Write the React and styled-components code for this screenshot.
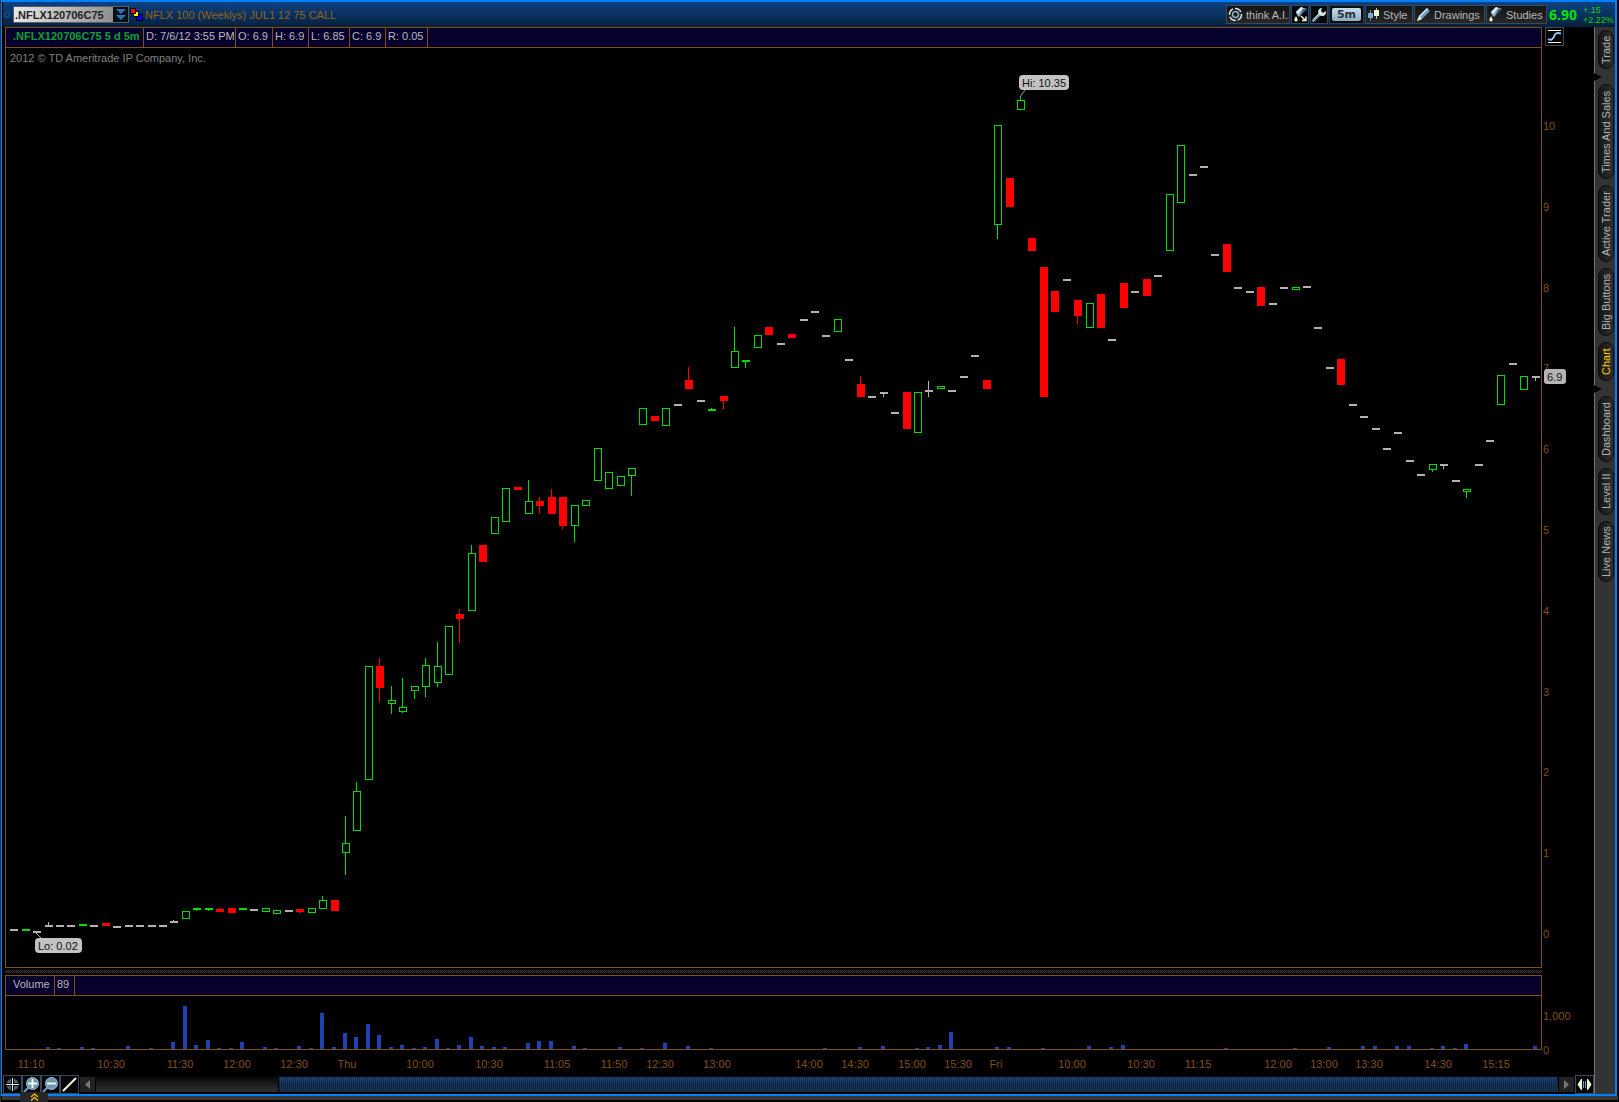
import React from "react";
import styled, { createGlobalStyle, css } from "styled-components";

// one entry per five minute bar: [kind, top, height, wick top, wick bottom]
// g = up, r = down, n = unchanged
const candles = [
  ["n", 929, 2], ["g", 929, 2], ["n", 931, 2], ["n", 925, 2, 922], ["n", 925, 2], ["n", 925, 2],
  ["g", 924, 2], ["n", 925, 2], ["r", 923, 3], ["n", 926, 2], ["n", 925, 2], ["n", 925, 2],
  ["n", 925, 2], ["n", 925, 2], ["n", 921, 2, 920], ["g", 911, 8], ["g", 908, 2, 0, 911], ["g", 908, 2, 0, 911],
  ["r", 909, 3, 908], ["r", 908, 5], ["g", 908, 2], ["n", 909, 2], ["g", 908, 4], ["g", 910, 4],
  ["n", 910, 2], ["r", 909, 3, 0, 913], ["g", 908, 5], ["g", 900, 9, 896], ["r", 900, 11], ["g", 843, 10, 816, 875],
  ["g", 791, 40, 782], ["g", 666, 114], ["r", 666, 22, 658, 702], ["g", 700, 4, 686, 714], ["g", 707, 5, 678, 713], ["g", 686, 5, 0, 699],
  ["g", 665, 22, 658, 697], ["g", 666, 17, 642, 687], ["g", 626, 49], ["r", 614, 5, 609, 643], ["g", 553, 58, 545], ["r", 545, 17],
  ["g", 517, 17], ["g", 488, 34], ["r", 487, 3], ["g", 501, 13, 480], ["r", 501, 5, 497, 514], ["r", 497, 17, 489],
  ["r", 497, 29, 0, 529], ["g", 505, 21, 0, 542], ["g", 500, 6], ["g", 448, 33], ["g", 472, 17], ["g", 476, 10],
  ["g", 468, 8, 0, 496], ["g", 408, 17], ["r", 416, 5], ["g", 408, 18], ["n", 404, 2], ["r", 380, 9, 367],
  ["n", 400, 2], ["g", 409, 2, 408], ["r", 396, 5, 0, 409], ["g", 351, 17, 327], ["g", 360, 2, 0, 368], ["g", 335, 13],
  ["r", 327, 8], ["n", 343, 2], ["r", 334, 4], ["n", 319, 2], ["n", 311, 2], ["n", 335, 2],
  ["g", 319, 13], ["n", 359, 2], ["r", 384, 13, 376], ["n", 396, 2], ["n", 392, 2, 0, 397], ["n", 412, 2],
  ["r", 392, 37], ["g", 392, 41], ["n", 390, 2, 381, 397], ["g", 386, 3], ["n", 390, 2], ["n", 376, 2],
  ["n", 355, 2], ["r", 380, 9], ["g", 125, 100, 0, 239], ["r", 178, 29], ["g", 100, 10, 97], ["r", 238, 13],
  ["r", 267, 130], ["r", 291, 21], ["n", 279, 2], ["r", 300, 16, 0, 324], ["g", 303, 25], ["r", 294, 34],
  ["n", 339, 2], ["r", 283, 25], ["n", 291, 2], ["r", 279, 17], ["n", 275, 2], ["g", 194, 57],
  ["g", 145, 58], ["n", 174, 2], ["n", 166, 2], ["n", 254, 2], ["r", 244, 28], ["n", 287, 2],
  ["n", 291, 2], ["r", 287, 19], ["n", 303, 2], ["n", 287, 2], ["g", 287, 3], ["n", 286, 2],
  ["n", 327, 2], ["n", 367, 2], ["r", 359, 26], ["n", 404, 2], ["n", 416, 2], ["n", 428, 2],
  ["n", 448, 2], ["n", 432, 2], ["n", 460, 2], ["n", 474, 2], ["g", 464, 6, 0, 472], ["n", 464, 2, 0, 469],
  ["n", 480, 2], ["g", 489, 3, 0, 498], ["n", 464, 2], ["n", 440, 2], ["g", 375, 30], ["n", 363, 2],
  ["g", 376, 14], ["n", 376, 2, 0, 381],
];

// [bar, height]
const volumes = [
  [3, 2], [4, 1], [6, 2], [7, 1], [10, 3], [12, 1], [14, 7], [15, 43], [16, 4], [17, 9], [18, 1], [19, 1],
  [20, 7], [22, 2], [23, 1], [25, 3], [26, 1], [27, 36], [28, 2], [29, 16], [30, 12], [31, 25], [32, 14],
  [33, 2], [34, 4], [35, 1], [36, 2], [37, 10], [38, 1], [39, 4], [40, 12], [41, 3], [42, 2], [43, 2],
  [45, 6], [46, 8], [47, 8], [49, 3], [50, 1], [53, 2], [55, 1], [57, 6], [59, 3], [61, 1], [71, 1],
  [74, 2], [76, 3], [79, 1], [80, 2], [81, 4], [82, 17], [86, 2], [87, 2], [90, 1], [94, 3], [96, 2],
  [97, 4], [106, 1], [112, 1], [115, 2], [118, 3], [119, 3], [121, 3], [122, 3], [124, 1], [125, 3],
  [126, 1], [127, 5], [133, 3],
];

const times = [
  [31, "11:10"], [111, "10:30"], [180, "11:30"], [237, "12:00"], [294, "12:30"], [347, "Thu"],
  [420, "10:00"], [489, "10:30"], [557, "11:05"], [614, "11:50"], [660, "12:30"], [717, "13:00"],
  [809, "14:00"], [855, "14:30"], [912, "15:00"], [958, "15:30"], [996, "Fri"], [1072, "10:00"],
  [1141, "10:30"], [1198, "11:15"], [1278, "12:00"], [1324, "13:00"], [1369, "13:30"],
  [1438, "14:30"], [1496, "15:15"],
];

const quotes = [
  ["D: 7/6/12 3:55 PM", 92],
  ["O: 6.9", 37],
  ["H: 6.9", 36],
  ["L: 6.85", 41],
  ["C: 6.9", 36],
  ["R: 0.05", 42],
];

const tabs = [
  ["Trade", 39, true],
  ["Times And Sales", 95],
  ["Active Trader", 77],
  ["Big Buttons", 68],
  ["Chart", 39, true],
  ["Dashboard", 66],
  ["Level II", 47],
  ["Live News", 61],
];

const colors = { g: "#00dc0a", r: "#ff0000", n: "#b2b2b2" };

const useSize = (w, h) => {
  const ref = React.useRef(null);
  const [size, setSize] = React.useState([w, h]);
  React.useLayoutEffect(() => {
    const read = () => {
      const box = ref.current.getBoundingClientRect();
      setSize([box.width, box.height]);
    };
    read();
    const ro = new ResizeObserver(read);
    ro.observe(ref.current);
    return () => ro.disconnect();
  }, []);
  return [ref, size[0], size[1]];
};

const barX = (i, w) => Math.round(4.22 + (i * (w - 13.45)) / 133);

const PricePlot = () => {
  const [ref, w, h] = useSize(1535, 919);
  const y = (v) => Math.round(((v - 48) * h) / 919);
  const loX = barX(2, w);
  const hiX = barX(88, w);
  return (
    <Plot ref={ref}>
      {candles.map(([kind, top, height, up, down], i) => {
        const x = barX(i, w);
        const bottom = top + height;
        const size = Math.max(2, y(bottom) - y(top));
        const color = colors[kind];
        return (
          <g key={i} fill={color}>
            {up ? <rect x={x + 3} y={y(up)} width="1" height={y(top) - y(up)} /> : null}
            {down ? <rect x={x + 3} y={y(bottom)} width="1" height={y(down) - y(bottom)} /> : null}
            {kind === "g" && size > 2 ? (
              <rect x={x + 0.5} y={y(top) + 0.5} width="7" height={size - 1} fill="none" stroke={color} />
            ) : (
              <rect x={x} y={y(top)} width="8" height={size} />
            )}
          </g>
        );
      })}
      <line x1={loX + 3} y1={y(933)} x2={loX + 8} y2={y(938)} stroke="#b2b2b2" />
      <rect x={loX + 2} y={y(938)} width="47" height="15" rx="4" fill="#c3c3c3" />
      <text x={loX + 5} y={y(938) + 12} fill="#111">Lo: 0.02</text>
      <line x1={hiX + 3} y1={y(97)} x2={hiX + 8} y2={y(90)} stroke="#999" />
      <rect x={hiX + 2} y={y(75)} width="50" height="15" rx="4" fill="#c3c3c3" />
      <text x={hiX + 5} y={y(75) + 12} fill="#111">Hi: 10.35</text>
    </Plot>
  );
};

const PriceAxis = () => {
  const [ref, , h] = useSize(52, 941);
  const y = (v) => Math.round(((v - 27) * h) / 941);
  return (
    <Axis ref={ref}>
      {[0, 1, 2, 3, 4, 5, 6, 7, 8, 9, 10].map((n) => (
        <text key={n} x="1" y={y(934 - n * 80.8) + 4}>{n}</text>
      ))}
      <rect x="2" y={y(369)} width="22" height="15" rx="3" fill="#b4b4b4" />
      <text x="5" y={y(369) + 12} className="last">6.9</text>
    </Axis>
  );
};

const VolumePlot = () => {
  const [ref, w, h] = useSize(1535, 53);
  return (
    <Plot ref={ref}>
      {volumes.map(([i, v]) => (
        <rect key={i} x={barX(i, w) + 1} y={h - v} width="4" height={v} fill="#1e41b4" />
      ))}
    </Plot>
  );
};

const TimeAxis = () => {
  const [ref, w] = useSize(1537, 25);
  return (
    <Axis ref={ref}>
      {times.map(([x, label]) => (
        <text key={x} x={Math.round(((x - 5) * w) / 1537)} y="18" textAnchor="middle">{label}</text>
      ))}
    </Axis>
  );
};

const Flask = ({ arrow }) => (
  <svg width="15" height="15" viewBox="0 0 15 15" aria-hidden="true">
    <path d="M3 5L8 0l6 2-4 3-4 5-2-2z" fill="#8db0cc" />
    <path d="M3 5l5-5 2 1-5 6z" fill="#e3eef6" />
    <path d="M10 2l4 0-7 7z" fill="#3d5f7c" />
    <path d="M3 9l1.500 3a1.700 1.700 0 1 1-3 0z" fill="#eef5c8" />
    {arrow && <path d="M8 9l4 4M13 9.500V13.500H9" fill="none" stroke="#eef5d8" strokeWidth="1.500" />}
  </svg>
);

const Magnifier = ({ plus }) => (
  <svg width="17" height="17" viewBox="0 0 17 17" aria-hidden="true">
    <path d="M1 16l5-5" stroke="#6d9cc0" strokeWidth="2" />
    <circle cx="9.500" cy="7.500" r="6" fill="#6b94b3" stroke="#9cc0da" />
    <path d={plus ? "M5 7.500h9M9.500 3v9" : "M5 7.500h9"} stroke="#f6fbe0" strokeWidth="2" />
  </svg>
);

const App = () => {
  const [symbol, setSymbol] = React.useState(".NFLX120706C75");
  const [tab, setTab] = React.useState("Chart");

  return (
    <Page>
      <GlobalStyle />
      <Frame>
        <TitleBar>
          <Ring />
          <SymbolBox>
            <input aria-label="Symbol" value={symbol} onChange={(e) => setSymbol(e.target.value)} />
            <button aria-label="Choose symbol">
              <svg width="10" height="13" viewBox="0 0 10 13" fill="#2c72bd">
                <path d="M0 1h10L5 6zM0 7h10l-5 5z" />
              </svg>
            </button>
          </SymbolBox>
          <LinkButton aria-label="Link group">
            <svg width="13" height="13" viewBox="0 0 13 13" stroke="#000" shapeRendering="crispEdges">
              <rect x="6.500" y="6.500" width="6" height="6" fill="#0000ff" />
              <rect x="3.500" y="3.500" width="5" height="5" fill="#ffff00" />
              <rect x="0.500" y="0.500" width="5" height="5" fill="#ff0000" />
            </svg>
          </LinkButton>
          <Description>NFLX 100 (Weeklys) JUL1 12 75 CALL</Description>
          <Tools>
            <ToolButton $w={64}>
              <svg width="15" height="15" viewBox="0 0 15 15" fill="none" aria-hidden="true">
                <circle cx="7.500" cy="7.500" r="6" stroke="#d5e4ef" strokeWidth="1.500" strokeDasharray="7 2" />
                <circle cx="7.500" cy="7.500" r="3" stroke="#8fb3cc" strokeWidth="1.500" />
                <circle cx="7.500" cy="7.500" r="1" fill="#0b1520" />
              </svg>
              think A.I.
            </ToolButton>
            <ToolButton $w={18} $dark aria-label="Edit studies">
              <Flask arrow />
            </ToolButton>
            <ToolButton $w={18} $dark aria-label="Settings">
              <svg width="15" height="15" viewBox="0 0 15 15" aria-hidden="true">
                <path d="M1.500 13.500l7-7" stroke="#6e96b5" strokeWidth="3" strokeLinecap="round" />
                <path d="M1.500 12.500l6-6" stroke="#dcebf3" strokeWidth="1" />
                <path d="M14 4a4 4 0 1 1-4-3L9 4l2 2z" fill="#d9e8dc" />
              </svg>
            </ToolButton>
            <Period><span>5m</span></Period>
            <ToolButton $w={48}>
              <svg width="13" height="13" viewBox="0 0 13 13" shapeRendering="crispEdges" aria-hidden="true">
                <path d="M3 2h1v11H3z" fill="#5b8fb8" />
                <rect x="1" y="5" width="5" height="5" fill="#79aed3" />
                <path d="M9 0h1v11H9z" fill="#b8c8a0" />
                <rect x="7" y="2" width="5" height="6" fill="#eaf3d2" />
              </svg>
              Style
            </ToolButton>
            <ToolButton $w={71}>
              <svg width="15" height="15" viewBox="0 0 15 15" aria-hidden="true">
                <path d="M1 14l2-5 8-8 3 3-8 8z" fill="#6f9cc4" />
                <path d="M3 9l8-8 1 1-8 8z" fill="#dbeaf5" />
                <path d="M1 14l2-5 3 3z" fill="#f0f3d8" />
              </svg>
              Drawings
            </ToolButton>
            <ToolButton $w={61}>
              <Flask />
              Studies
            </ToolButton>
          </Tools>
          <LastPrice>6.90</LastPrice>
          <Change>
            <span>+.15</span>
            <span>+2.22%</span>
          </Change>
        </TitleBar>

        <Body>
          <ChartColumn>
            <Charts>
              <Panel>
                <PanelHeader>
                  <HeaderCell $w={138} $strong>.NFLX120706C75 5 d 5m</HeaderCell>
                  {quotes.map(([text, w]) => (
                    <HeaderCell key={text} $w={w}>{text}</HeaderCell>
                  ))}
                </PanelHeader>
                <PlotArea>
                  <Copyright>2012 © TD Ameritrade IP Company, Inc.</Copyright>
                  <PricePlot />
                </PlotArea>
              </Panel>
              <AxisCell>
                <PriceAxis />
                <CurveButton aria-label="Fit curve">
                  <svg width="17" height="17" viewBox="0 0 17 17" fill="none" aria-hidden="true">
                    <path d="M2 2.500h13M2 14.500h13" stroke="#f4f5dc" />
                    <path d="M2 11c3 2 5 0 6-2.500S10 4 15 5.500" stroke="#8fc6f0" strokeWidth="2" />
                  </svg>
                </CurveButton>
              </AxisCell>
              <Splitter />
              <Panel>
                <PanelHeader>
                  <HeaderCell $w={49} $first>Volume</HeaderCell>
                  <HeaderCell $w={20}>89</HeaderCell>
                </PanelHeader>
                <PlotArea>
                  <VolumePlot />
                </PlotArea>
              </Panel>
              <AxisCell>
                <Axis>
                  <text x="1" y="45">1,000</text>
                  <text x="1" y="79">0</text>
                </Axis>
              </AxisCell>
              <AxisCell>
                <TimeAxis />
              </AxisCell>
            </Charts>
            <BottomBar>
              <IconButton aria-label="Crosshair">
                <svg width="17" height="17" viewBox="0 0 17 17" aria-hidden="true">
                  <circle cx="8.500" cy="8.500" r="6" fill="#47637a" />
                  <path d="M2 8.500h13M8.500 2v13" stroke="#000" strokeWidth="3" />
                  <path d="M2 8.500h13M8.500 2v13" stroke="#eef3d8" />
                </svg>
              </IconButton>
              <IconButton aria-label="Zoom in"><Magnifier plus /></IconButton>
              <IconButton aria-label="Zoom out"><Magnifier /></IconButton>
              <IconButton aria-label="Trend line">
                <svg width="17" height="17" viewBox="0 0 17 17" aria-hidden="true">
                  <path d="M2 15L15 2" stroke="#f2f6dc" strokeWidth="2" />
                </svg>
              </IconButton>
              <ArrowButton aria-label="Scroll left">
                <svg width="5" height="9" viewBox="0 0 5 9" fill="#777"><path d="M5 0v9L0 4.500z" /></svg>
              </ArrowButton>
              <Track>
                <Thumb role="scrollbar" aria-label="Time range" aria-controls="root" aria-valuenow={100} />
              </Track>
              <ArrowButton aria-label="Scroll right">
                <svg width="5" height="9" viewBox="0 0 5 9" fill="#777"><path d="M0 0v9l5-4.500z" /></svg>
              </ArrowButton>
              <IconButton aria-label="Fit width">
                <svg width="17" height="17" viewBox="0 0 17 17" aria-hidden="true">
                  <path d="M6 3v11L5 14 1.500 8.500 5 3zM11 3v11h1l3.500-5.500L12 3z" fill="#f1f5d6" />
                  <path d="M7.500 5v7M9.500 5v7" stroke="#6f9cc4" />
                </svg>
              </IconButton>
            </BottomBar>
          </ChartColumn>
          <SideBar>
            {tabs.map(([name, h, notch]) => (
              <React.Fragment key={name}>
                <Tab $h={h} $on={tab === name} onClick={() => setTab(name)}>{name}</Tab>
                {notch && <Notch />}
              </React.Fragment>
            ))}
          </SideBar>
        </Body>
      </Frame>
      <Footer>
        <Expand aria-label="Expand">
          <svg width="9" height="8" viewBox="0 0 9 8" fill="none" stroke="#e6b400" aria-hidden="true">
            <path d="M1 4l3.500-3L8 4M1 7.500l3.500-3 3.500 3" strokeWidth="1.500" />
          </svg>
        </Expand>
      </Footer>
    </Page>
  );
};

const GlobalStyle = createGlobalStyle`
  * { box-sizing: border-box; }
  body {
    margin: 0;
    background: #000;
    color: #b8b8b8;
    font-family: "Liberation Sans", Arial, sans-serif;
    font-size: 11px;
  }
  button, input {
    margin: 0;
    padding: 0;
    border: 0;
    font: inherit;
    color: inherit;
    background: none;
  }
  svg { display: block; flex: none; }
`;
const center = css`
  display: flex;
  align-items: center;
  justify-content: center;
`;
const Page = styled.div`
  display: flex;
  flex-direction: column;
  height: 100vh;
  min-height: 600px;
  border-left: 1px solid #333;
`;
const Frame = styled.div`
  flex: 1;
  min-height: 0;
  display: flex;
  flex-direction: column;
  margin-right: 2px;
  border: 2px solid #0080ff;
  border-left-width: 1px;
`;
const TitleBar = styled.div`
  display: flex;
  align-items: center;
  height: 25px;
  margin-left: 1px;
  background: linear-gradient(#0c4282, #0a3160 50%, #05203c);
`;
const Ring = styled.span`
  width: 6px;
  height: 6px;
  margin: 0 3px 0 1px;
  border: 1px solid #0b57ae;
  border-radius: 50%;
`;
const SymbolBox = styled.div`
  display: flex;
  width: 116px;
  height: 17px;
  border: 1px solid #52606e;
  input {
    flex: 1;
    min-width: 0;
    padding-left: 1px;
    color: #222;
    font-weight: 700;
    background: linear-gradient(100deg, #e8e8e8, #8e8e8e);
  }
  button {
    ${center}
    width: 15px;
    background: #0a0f16;
  }
`;
const LinkButton = styled.button`
  margin-left: 1px;
`;
const Description = styled.span`
  margin-left: 2px;
  color: #966414;
`;
const Tools = styled.div`
  display: flex;
  gap: 1px;
  margin-left: auto;
`;
const ToolButton = styled.button`
  display: flex;
  align-items: center;
  gap: 3px;
  width: ${(props) => props.$w}px;
  height: 19px;
  padding-left: 1px;
  white-space: nowrap;
  border: 1px solid #3c4856;
  background: ${(props) => (props.$dark ? "#05080c" : "linear-gradient(#141414, #272727)")};
`;
const Period = styled.button`
  width: 35px;
  height: 19px;
  padding: 2px;
  border: 1px solid #2c3a4a;
  background: #0a0d12;
  span {
    display: block;
    height: 13px;
    line-height: 13px;
    border-radius: 2px;
    color: #26343f;
    font-family: "DejaVu Sans", sans-serif;
    font-weight: 700;
    background: linear-gradient(#c6dcec, #8fabc4);
  }
`;
const LastPrice = styled.span`
  margin-left: 2px;
  color: #00e400;
  font-family: "Open Sans", sans-serif;
  font-size: 14px;
  font-weight: 700;
`;
const Change = styled.span`
  display: flex;
  flex-direction: column;
  width: 32px;
  margin-left: 6px;
  color: #00dc00;
  font-size: 9px;
  line-height: 10px;
`;
const Body = styled.div`
  flex: 1;
  min-height: 0;
  display: flex;
`;
const ChartColumn = styled.div`
  flex: 1;
  min-width: 0;
  display: flex;
  flex-direction: column;
`;
const Charts = styled.div`
  flex: 1;
  min-height: 0;
  display: grid;
  grid-template-columns: minmax(0, 1fr) 52px;
  grid-template-rows: minmax(0, 1fr) 7px 75px 25px;
  margin-left: 3px;
`;
const Panel = styled.div`
  display: flex;
  flex-direction: column;
  min-height: 0;
  border: 1px solid #824f14;
`;
const PanelHeader = styled.div`
  display: flex;
  flex: none;
  height: 20px;
  border-bottom: 1px solid #824f14;
  background: #06002c;
`;
const HeaderCell = styled.div`
  width: ${(props) => props.$w}px;
  padding-left: ${(props) => (props.$strong || props.$first ? 7 : 2)}px;
  line-height: 17px;
  white-space: nowrap;
  border-right: 1px solid #824f14;
  ${(props) => props.$strong && css`
    color: #0fa032;
    font-weight: 700;
  `}
`;
const PlotArea = styled.div`
  position: relative;
  flex: 1;
  min-height: 0;
`;
const Plot = styled.svg`
  width: 100%;
  height: 100%;
  font-size: 11px;
  overflow: visible;
`;
const Copyright = styled.span`
  position: absolute;
  top: 4px;
  left: 4px;
  color: #808080;
  line-height: 12px;
`;
const AxisCell = styled.div`
  position: relative;
  min-height: 0;
`;
const Axis = styled.svg`
  width: 100%;
  height: 100%;
  overflow: visible;
  font-size: 11px;
  fill: #824f14;
  .last { fill: #111; }
`;
const CurveButton = styled.button`
  position: absolute;
  top: 0;
  left: 3px;
  border: 1px solid #3c4856;
`;
const Splitter = styled.div`
  grid-column: 1 / -1;
  height: 3px;
  margin: 2px 52px 2px 0;
  background: repeating-conic-gradient(#404040 0 25%, #000 0 50%) 0 0 / 2px 2px;
`;
const BottomBar = styled.div`
  display: flex;
  align-items: center;
  height: 19px;
  margin-left: 1px;
`;
const IconButton = styled.button`
  ${center}
  width: 19px;
  height: 19px;
  border: 1px solid #3c4856;
  background: #03060a;
`;
const ArrowButton = styled.button`
  ${center}
  width: 15px;
  height: 15px;
  margin: 0 1px;
  background: #222;
`;
const Track = styled.div`
  flex: 1;
  display: flex;
  justify-content: flex-end;
  height: 15px;
  background: linear-gradient(#080808, #303030);
`;
const Thumb = styled.div`
  width: 87.5%;
  margin-right: 1px;
  border-left: 1px solid #000;
  background:
    repeating-linear-gradient(90deg, rgba(0, 0, 0, 0.35) 0 1px, transparent 1px 2px),
    linear-gradient(#1d4a80, #153560 50%, #1b3450);
`;
const SideBar = styled.div`
  display: flex;
  flex-direction: column;
  gap: 6px;
  width: 21px;
  padding: 3px 0 0 3px;
  border-left: 1px solid #757575;
  background: #333;
`;
const Tab = styled.button`
  ${center}
  width: 16px;
  height: ${(props) => props.$h}px;
  border: 1px solid #0c0c0c;
  border-radius: 8px;
  background: linear-gradient(90deg, #303030, #161616);
  color: ${(props) => (props.$on ? "#ffc800" : "#b0b0b0")};
  line-height: 14px;
  white-space: nowrap;
  writing-mode: vertical-rl;
  transform: rotate(180deg);
`;
const Notch = styled.i`
  width: 8px;
  height: 8px;
  margin: -2px 0 -3px -4px;
  background: #000;
  clip-path: polygon(0 0, 100% 50%, 0 100%);
`;
const Footer = styled.div`
  position: relative;
  height: 6px;
  margin: 0 1px;
  border-bottom: 2px solid #000;
  background: #383838;
`;
const Expand = styled.button`
  ${center}
  position: absolute;
  left: 18px;
  bottom: -2px;
  width: 28px;
  height: 10px;
  border-radius: 3px 3px 0 0;
  background: #262626;
`;

export default App;
